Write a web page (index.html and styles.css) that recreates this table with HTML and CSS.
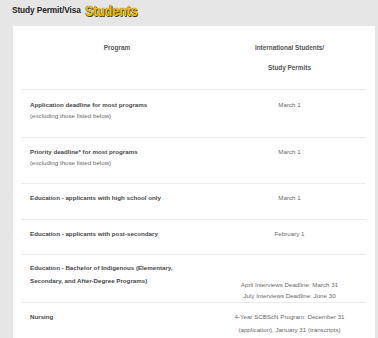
FILE: index.html
```html
<!DOCTYPE html>
<html>
<head>
<meta charset="utf-8">
<link rel="stylesheet" href="styles.css">
</head>
<body>
<div class="title">
  <span class="title-small">Study Permit/Visa</span>
  <span class="title-big">Students</span>
</div>
<div class="panel">
  <div class="row head">
    <div class="cell left"><div class="th">Program</div></div>
    <div class="cell right"><div class="th">International Students/</div><div class="th">Study Permits</div></div>
  </div>
  <div class="row r1">
    <div class="cell left"><div class="b">Application deadline for most programs</div><div class="n">(excluding those listed below)</div></div>
    <div class="cell right"><div class="n">March 1</div></div>
  </div>
  <div class="row r2">
    <div class="cell left"><div class="b">Priority deadline* for most programs</div><div class="n">(excluding those listed below)</div></div>
    <div class="cell right"><div class="n">March 1</div></div>
  </div>
  <div class="row r3">
    <div class="cell left"><div class="b">Education - applicants with high school only</div></div>
    <div class="cell right"><div class="n">March 1</div></div>
  </div>
  <div class="row r4">
    <div class="cell left"><div class="b">Education - applicants with post-secondary</div></div>
    <div class="cell right"><div class="n">February 1</div></div>
  </div>
  <div class="row r5">
    <div class="cell left"><div class="b tall">Education - Bachelor of Indigenous (Elementary,<br>Secondary, and After-Degree Programs)</div></div>
    <div class="cell right"><div class="n">April Interviews Deadline: March 31</div><div class="n">July Interviews Deadline: June 30</div></div>
  </div>
  <div class="row r6">
    <div class="cell left"><div class="b tall">Nursing</div></div>
    <div class="cell right"><div class="n tall">4-Year SCBScN Program: December 31<br>(application), January 31 (transcripts)</div></div>
  </div>
</div>
</body>
</html>
```
FILE: styles.css
```css
html, body {
  margin: 0;
  padding: 0;
  background: #e6e6e6;
  font-family: "Liberation Sans", Arial, sans-serif;
  height: 338px;
  overflow: hidden;
}
.title {
  height: 26px;
  display: flex;
  align-items: center;
  padding-left: 12px;
  gap: 4px;
  box-sizing: border-box;
  padding-bottom: 6px;
}
.title-small {
  font-size: 8.3px;
  font-weight: bold;
  color: #222;
  letter-spacing: -0.1px;
}
.title-big {
  display: inline-block;
  font-size: 15px;
  font-weight: bold;
  color: #f6c200;
  transform: scaleX(0.82);
  transform-origin: left center;
  text-shadow: 0 0 1px #3a2a00, 1px 1px 0 #4a3a10;
}
.panel {
  margin-left: 13px;
  width: 362px;
  box-sizing: border-box;
  background: #fff;
  padding: 0 9px 0 8px;
  height: 312px;
  overflow: hidden;
}
.row {
  display: grid;
  grid-template-columns: 192px 1fr;
  border-top: 1px solid #ececec;
  align-items: start;
  font-size: 6.4px;
}
.row.head {
  border-top: none;
  padding: 12px 0 11px;
}
.cell.left { padding-left: 9px; }
.head .cell.left { padding-left: 0; text-align: center; }
.cell.right { text-align: center; }
.th {
  font-size: 6.4px;
  font-weight: bold;
  color: #555;
  line-height: 20px;
}
.b {
  font-size: 6.2px;
  font-weight: bold;
  color: #474747;
  line-height: 11px;
}
.n {
  font-size: 6.2px;
  color: #6a6a6a;
  line-height: 11px;
}
.tall { line-height: 13px; }
.r1 { padding: 9px 0 16px; }
.r2 { padding: 8px 0 15px; }
.r3 { padding: 8px 0 16px; }
.r4 { padding: 8px 0 15px; }
.r5 .cell.left { padding-top: 6px; padding-bottom: 15px; }
.r5 .cell.right { padding-top: 24px; }
.r6 { padding: 7px 0 10px; }
```
